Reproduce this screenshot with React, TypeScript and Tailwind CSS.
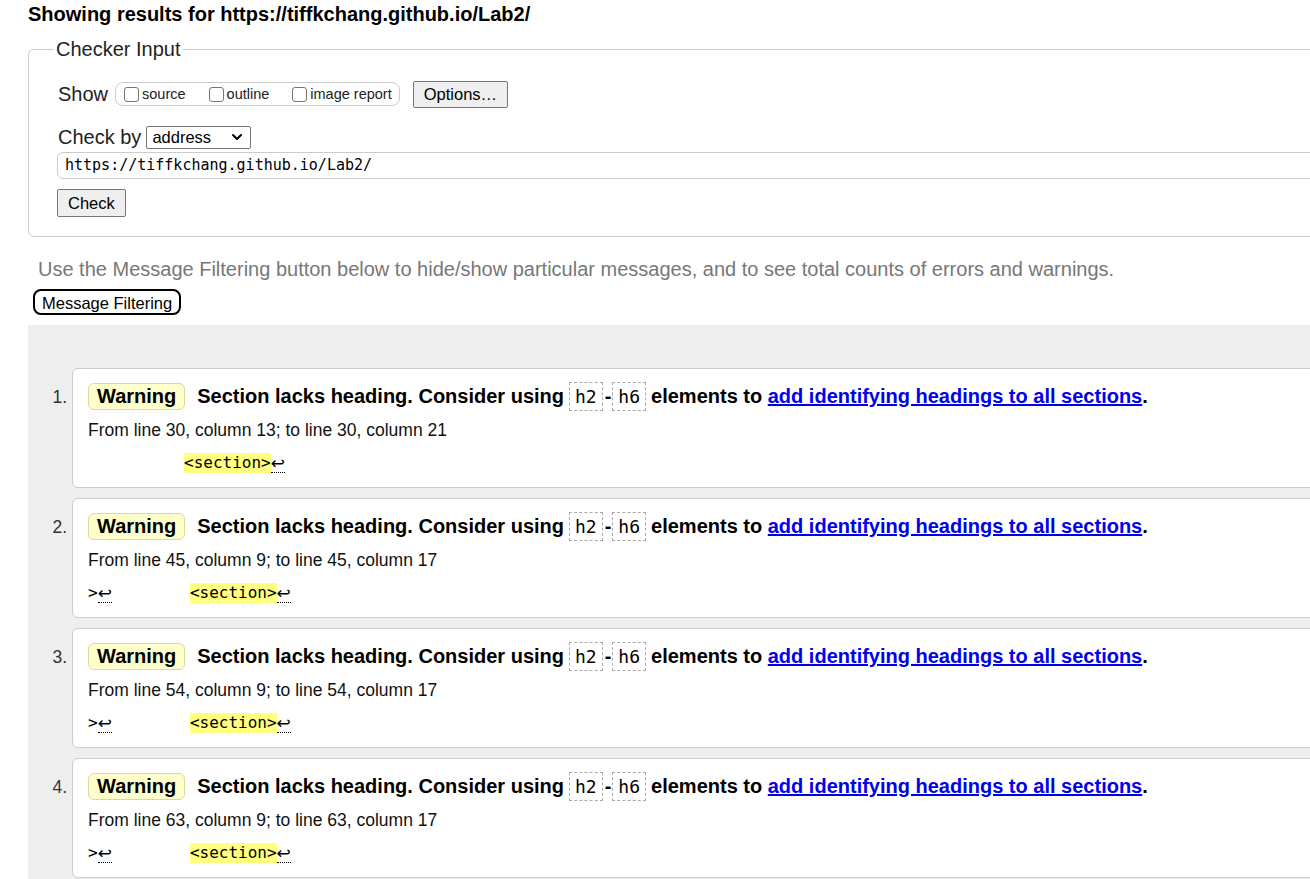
import { ChevronDown } from 'lucide-react';

// Validator results page — input fieldset, filtering hint and warning list.

const SANS = 'font-["Liberation_Sans",Arial,sans-serif]';
const MONO = 'font-["DejaVu_Sans_Mono","Liberation_Mono",monospace]';

interface Msg {
  n: number;
  from: string;
  lead: boolean;
}

const MESSAGES: Msg[] = [
  { n: 1, from: 'From line 30, column 13; to line 30, column 21', lead: false },
  { n: 2, from: 'From line 45, column 9; to line 45, column 17', lead: true },
  { n: 3, from: 'From line 54, column 9; to line 54, column 17', lead: true },
  { n: 4, from: 'From line 63, column 9; to line 63, column 17', lead: true },
];

function Box({ label }: { label: string }) {
  return (
    <span className="inline-flex items-center gap-[3px]">
      <span className="inline-block h-[15px] w-[15px] rounded-[3px] border border-[#767676] bg-white" />
      <span className="pt-[2px] text-[14.5px] text-[#222]">{label}</span>
    </span>
  );
}

function Return() {
  return (
    <span className='border-b border-dotted border-black font-["DejaVu_Sans",sans-serif] text-[17px] leading-[18px]'>
      ↩
    </span>
  );
}

function Code({ children, className }: { children: string; className: string }) {
  return (
    <code
      className={`${MONO} ${className} inline-flex h-[29px] items-center border border-dashed border-[#aaa] px-[5px] text-[18px] font-normal`}
    >
      {children}
    </code>
  );
}

function Message({ m }: { m: Msg }) {
  return (
    <li className="flex">
      <span className="w-[44px] shrink-0 pt-[16px] pr-[5px] text-right text-[17.5px] text-[#333]">
        {m.n}.
      </span>
      <div className="h-[120px] w-[1300px] shrink-0 rounded-l-[6px] border border-[#ccc] bg-white pl-[15px] pt-[12px]">
        <p className="flex items-center text-[20px] font-bold text-black">
          <span className="mr-[12px] inline-flex h-[27px] items-center rounded-[6px] border border-[#ddd8a0] bg-[#ffffcc] px-[8px]">
            Warning
          </span>
          Section lacks heading. Consider using
          <Code className="mr-[2px] ml-[5px]">h2</Code>-<Code className="mr-[5px] ml-[1px]">h6</Code>
          elements to&nbsp;
          <a href="#" className="text-[#0000ee] underline">
            add identifying headings to all sections
          </a>
          .
        </p>
        <p className="mt-[8px] text-[17.5px] leading-[22px] text-[#111]">{m.from}</p>
        <p className={`${MONO} mt-[12px] flex items-center text-[16px] leading-[20px] text-black`}>
          {m.lead ? (
            <>
              <span>&gt;</span>
              <Return />
              <span className="w-[78px]" />
            </>
          ) : (
            <span className="w-[96px]" />
          )}
          <span className="bg-[#ffff80]">&lt;section&gt;</span>
          <Return />
        </p>
      </div>
    </li>
  );
}

export default function App() {
  return (
    <div className={`${SANS} h-[879px] w-[1310px] overflow-hidden bg-white text-black`}>
      <div className="w-[1500px] pl-[28px]">
        <h2 className="pt-[2px] text-[20px] leading-[24px] font-bold">
          Showing results for https://tiffkchang.github.io/Lab2/
        </h2>

        <fieldset className="mt-[11px] rounded-[6px] border border-[#ccc] pr-0 pb-[19px] pl-[29px]">
          <legend className="-ml-[4px] px-[2px] text-[20px] leading-[24px] text-[#222]">
            Checker Input
          </legend>

          <div className="mt-[18px] flex items-center">
            <span className="text-[20px] text-[#222]">Show</span>
            <span className="ml-[7px] flex h-[24px] items-center gap-[23px] rounded-[8px] border border-[#ccc] pr-[7px] pl-[8px]">
              <Box label="source" />
              <Box label="outline" />
              <Box label="image report" />
            </span>
            <button
              type="button"
              className="ml-[13px] h-[27px] rounded-[2px] border border-[#767676] bg-[#efefef] px-[10px] text-[16.5px] text-black"
            >
              Options…
            </button>
          </div>

          <div className="mt-[13px] flex items-center">
            <span className="text-[20px] text-[#222]">Check by</span>
            <span className="ml-[5px] flex h-[23px] w-[105px] items-center justify-between rounded-[2px] border border-[#767676] pr-[5px] pl-[5px] text-[16.5px]">
              address
              <ChevronDown size={16} strokeWidth={3} />
            </span>
          </div>

          <div
            className={`${MONO} -ml-[1px] flex h-[27px] items-center rounded-l-[6px] border border-[#ccc] pl-[7px] text-[15px] text-black`}
          >
            https://tiffkchang.github.io/Lab2/
          </div>

          <button
            type="button"
            className="mt-[10px] -ml-[1px] h-[28px] rounded-[2px] border border-[#767676] bg-[#efefef] px-[10px] text-[16.5px] text-black"
          >
            Check
          </button>
        </fieldset>

        <p className="mt-[20px] ml-[10px] text-[20px] leading-[24px] text-[#777]">
          Use the Message Filtering button below to hide/show particular messages, and to see total
          counts of errors and warnings.
        </p>

        <button
          type="button"
          className="mt-[8px] ml-[5px] h-[26px] rounded-[8px] border-2 border-black bg-white px-[7px] text-[16.5px] text-black"
        >
          Message Filtering
        </button>

        <ol className="mt-[9px] flex flex-col gap-[10px] bg-[#eee] pt-[43px] pb-[20px]">
          {MESSAGES.map((m) => (
            <Message key={m.n} m={m} />
          ))}
        </ol>
      </div>
    </div>
  );
}
